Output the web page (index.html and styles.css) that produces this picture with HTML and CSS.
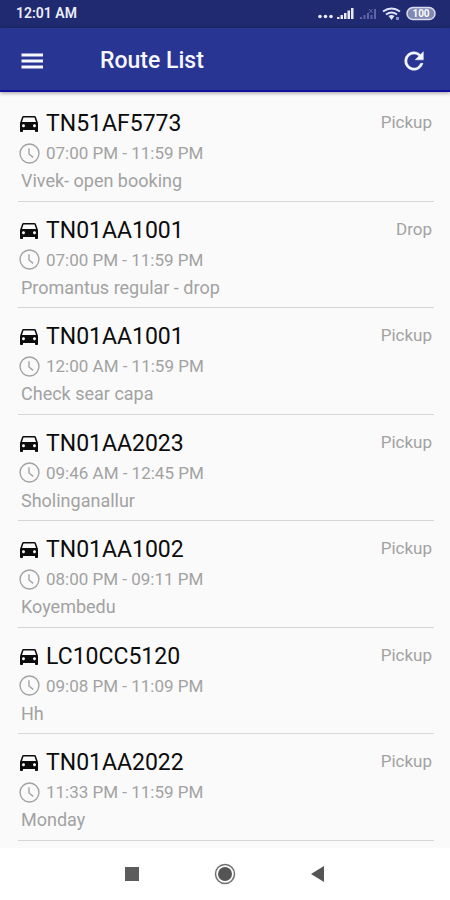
FILE: index.html
```html
<!DOCTYPE html>
<html lang="en">
<head>
<meta charset="utf-8">
<meta name="viewport" content="width=device-width, initial-scale=1">
<title>Route List</title>
<link rel="stylesheet" href="styles.css">
</head>
<body>
<svg class="symbols" aria-hidden="true">
  <symbol id="car" viewBox="2 2 20 20"><path d="M18.92 5.01C18.72 4.42 18.16 4 17.5 4h-11c-.66 0-1.21.42-1.42 1.01L3 11v8c0 .55.45 1 1 1h1c.55 0 1-.45 1-1v-1h12v1c0 .55.45 1 1 1h1c.55 0 1-.45 1-1v-8l-2.080-5.990zM6.500 15.200c-.83 0-1.500-.67-1.500-1.500S5.670 12.200 6.500 12.200s1.500.67 1.500 1.500S7.330 15.200 6.500 15.200zm11 0c-.83 0-1.500-.67-1.500-1.500s.67-1.500 1.500-1.500 1.500.67 1.500 1.500-.67 1.500-1.500 1.500zM5 10l1.500-4.500h11L19 10H5z"/></symbol>
  <symbol id="clock" viewBox="0 0 20 20"><circle cx="10" cy="10" r="9"/><path d="M9.500 5v5.500l4 3.200"/></symbol>
</svg>
<div class="status">
  <span>12:01 AM</span>
  <svg class="signals" viewBox="0 0 120 18" role="img" aria-label="Signal, Wi-Fi and battery full">
    <g fill="#e8eaf8">
      <circle cx="3" cy="14.500" r="1.800"/><circle cx="8.500" cy="14.500" r="1.800"/><circle cx="14" cy="14.500" r="1.800"/>
      <path d="M20 15h2.500v2H20zM23.500 13H26v4h-2.500zM27 11h2.500v6H27zM30.500 8.500H33V17h-2.500zM34 6h2.500v11H34z"/>
    </g>
    <path fill="#5c65a6" d="M43 15h2v2h-2zM46.500 13h2v4h-2zM50 11h2v6h-2zM53.500 13h2v4h-2zM57 7h2v10h-2z"/>
    <path stroke="#5c65a6" d="M52 7l3.500 4m0-4l-3.500 4"/>
    <g fill="none" stroke="#dfe3fa" stroke-width="2">
      <path d="M66 9.500q8.500-6 17 0M69 12.500q5.500-4 11 0"/>
    </g>
    <path fill="#dfe3fa" d="M71.500 14q3-2 6 0l-3 4z"/>
    <path fill="#8990c5" d="M79 15h3v3h-3z"/>
    <rect x="90" y="5.500" width="28" height="12" rx="6" fill="#8089b4" stroke="#d9dced" stroke-width="1.500"/>
    <text class="charge" x="104" y="15" text-anchor="middle">100</text>
  </svg>
</div>
<header class="bar">
  <button class="icon-button" type="button" aria-label="Open menu">
    <svg width="24" height="24" viewBox="0 0 24 24"><path fill="currentColor" d="M1.500 4.500h21.500v3H1.500zM1.500 10.500h21.500v3H1.500zM1.500 16.500h21.500v3H1.500z"/></svg>
  </button>
  <h1>Route List</h1>
  <button class="icon-button" type="button" aria-label="Refresh">
    <svg width="28" height="28" viewBox="0 0 24 24"><path fill="currentColor" stroke="currentColor" stroke-width=".4" d="M17.650 6.350A7.958 7.958 0 0 0 12 4a8 8 0 1 0 7.730 10h-2.080A6 6 0 1 1 12 6c1.660 0 3.140.69 4.220 1.780L13 11h7V4z"/></svg>
  </button>
</header>
<main class="routes">
  <article class="route"><h2><svg class="car"><use href="#car"/></svg>TN51AF5773</h2><span class="kind">Pickup</span><p class="time"><svg class="clock"><use href="#clock"/></svg>07:00 PM - 11:59 PM</p><p class="name">Vivek- open booking</p></article>
  <article class="route"><h2><svg class="car"><use href="#car"/></svg>TN01AA1001</h2><span class="kind">Drop</span><p class="time"><svg class="clock"><use href="#clock"/></svg>07:00 PM - 11:59 PM</p><p class="name">Promantus regular - drop</p></article>
  <article class="route"><h2><svg class="car"><use href="#car"/></svg>TN01AA1001</h2><span class="kind">Pickup</span><p class="time"><svg class="clock"><use href="#clock"/></svg>12:00 AM - 11:59 PM</p><p class="name">Check sear capa</p></article>
  <article class="route"><h2><svg class="car"><use href="#car"/></svg>TN01AA2023</h2><span class="kind">Pickup</span><p class="time"><svg class="clock"><use href="#clock"/></svg>09:46 AM - 12:45 PM</p><p class="name">Sholinganallur</p></article>
  <article class="route"><h2><svg class="car"><use href="#car"/></svg>TN01AA1002</h2><span class="kind">Pickup</span><p class="time"><svg class="clock"><use href="#clock"/></svg>08:00 PM - 09:11 PM</p><p class="name">Koyembedu</p></article>
  <article class="route"><h2><svg class="car"><use href="#car"/></svg>LC10CC5120</h2><span class="kind">Pickup</span><p class="time"><svg class="clock"><use href="#clock"/></svg>09:08 PM - 11:09 PM</p><p class="name">Hh</p></article>
  <article class="route"><h2><svg class="car"><use href="#car"/></svg>TN01AA2022</h2><span class="kind">Pickup</span><p class="time"><svg class="clock"><use href="#clock"/></svg>11:33 PM - 11:59 PM</p><p class="name">Monday</p></article>
</main>
<nav class="system" aria-label="System navigation">
  <button type="button" aria-label="Recent apps"><svg width="24" height="24" viewBox="0 0 24 24"><path fill="#5c5c5c" d="M5 5h14v14H5z"/></svg></button>
  <button type="button" aria-label="Home"><svg width="24" height="24" viewBox="0 0 24 24"><circle cx="12" cy="12" r="9.500" fill="none" stroke="#707070" stroke-width="1.500"/><circle cx="12" cy="12" r="7" fill="#555"/></svg></button>
  <button type="button" aria-label="Back"><svg width="24" height="24" viewBox="0 0 24 24"><path fill="#555" d="M5 12l13-8v16z"/></svg></button>
</nav>
</body>
</html>
```
FILE: styles.css
```css
* { box-sizing: border-box; }

body {
  margin: 0;
  min-height: 100vh;
  display: flex;
  flex-direction: column;
  background: #fafafa;
  color: #0c0c0c;
  font-family: Roboto, "Liberation Sans", sans-serif;
}

h1, h2, p { margin: 0; font-weight: 400; }

button {
  padding: 0;
  border: 0;
  background: none;
  color: inherit;
  display: flex;
  align-items: center;
  justify-content: center;
}

.symbols { position: absolute; width: 0; height: 0; }

.status {
  height: 28px;
  padding: 0 13px 2px 16px;
  display: flex;
  align-items: center;
  justify-content: space-between;
  background: #202a70;
  color: #eceefa;
  font-size: 14px;
  font-weight: 600;
}

.signals { width: 120px; height: 18px; margin-bottom: 4px; overflow: visible; }
.charge { font-size: 10px; font-weight: 700; fill: #fff; }

.bar {
  height: 64px;
  padding: 4px 16px 0;
  display: flex;
  align-items: center;
  background: #283593;
  border-bottom: 2px solid #10109a;
  box-shadow: 0 1px 4px rgba(0, 0, 0, 0.4);
  color: #f7f8ff;
}

.bar h1 {
  flex: 1;
  padding-left: 52px;
  font-size: 23px;
  line-height: 32px;
  font-weight: 500;
}

.icon-button { width: 32px; height: 40px; }
.icon-button:last-child { width: 40px; }

.routes {
  flex: 1;
  padding: 3px 16px 7px 18px;
  display: flex;
  flex-direction: column;
}

.route {
  flex: 1;
  padding: 14px 2px 0 1px;
  display: grid;
  grid-template-columns: 1fr auto;
  align-content: start;
  border-bottom: 1px solid #d6d6d6;
}

.route h2 {
  display: flex;
  align-items: center;
  gap: 7px;
  font-size: 23px;
  line-height: 30px;
}

.kind {
  font-size: 17px;
  line-height: 26px;
  color: #a2a2a2;
}

.time, .name { grid-column: 1 / -1; color: #a2a2a2; }

.time {
  display: flex;
  align-items: center;
  gap: 6px;
  font-size: 17px;
  line-height: 28px;
}

.name {
  padding-left: 2px;
  font-size: 18px;
  line-height: 28px;
}

.car { width: 20px; height: 20px; fill: #0c0c0c; }
.clock { width: 21px; height: 21px; fill: none; stroke: #a2a2a2; stroke-width: 1.3; }

.system {
  height: 52px;
  padding: 0 86px 0 85px;
  display: grid;
  grid-template-columns: repeat(3, 1fr);
  align-items: center;
  background: #fff;
}
```
